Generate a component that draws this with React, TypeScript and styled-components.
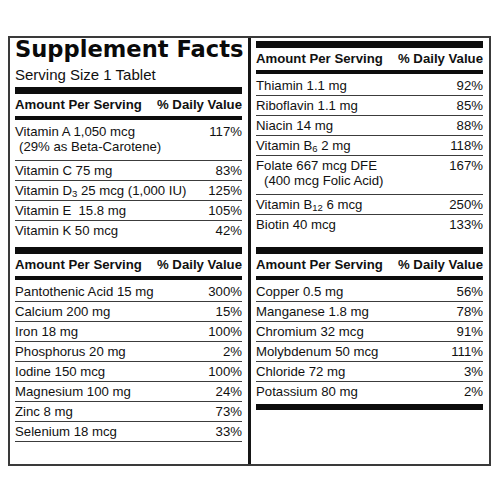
import React from 'react';
import styled, { createGlobalStyle } from 'styled-components';

type Nutrient = {
  name: React.ReactNode;
  dv: string;
  note?: string;
  indent?: number;
};

// subscripts (D3, B6, B12) are used inside the data, so this one is declared first
const Sub = styled.sub`
  font-size: 9.5px;
  line-height: 0;
  vertical-align: -2px;
`;

const topLeft: Nutrient[] = [
  { name: 'Vitamin A 1,050 mcg', note: '(29% as Beta-Carotene)', indent: 4, dv: '117%' },
  { name: 'Vitamin C 75 mg', dv: '83%' },
  { name: <>Vitamin D<Sub>3</Sub> 25 mcg (1,000 IU)</>, dv: '125%' },
  { name: 'Vitamin E  15.8 mg', dv: '105%' },
  { name: 'Vitamin K 50 mcg', dv: '42%' },
];

const bottomLeft: Nutrient[] = [
  { name: 'Pantothenic Acid 15 mg', dv: '300%' },
  { name: 'Calcium 200 mg', dv: '15%' },
  { name: 'Iron 18 mg', dv: '100%' },
  { name: 'Phosphorus 20 mg', dv: '2%' },
  { name: 'Iodine 150 mcg', dv: '100%' },
  { name: 'Magnesium 100 mg', dv: '24%' },
  { name: 'Zinc 8 mg', dv: '73%' },
  { name: 'Selenium 18 mcg', dv: '33%' },
];

const topRight: Nutrient[] = [
  { name: 'Thiamin 1.1 mg', dv: '92%' },
  { name: 'Riboflavin 1.1 mg', dv: '85%' },
  { name: 'Niacin 14 mg', dv: '88%' },
  { name: <>Vitamin B<Sub>6</Sub> 2 mg</>, dv: '118%' },
  { name: 'Folate 667 mcg DFE', note: '(400 mcg Folic Acid)', indent: 8, dv: '167%' },
  { name: <>Vitamin B<Sub>12</Sub> 6 mcg</>, dv: '250%' },
  { name: 'Biotin 40 mcg', dv: '133%' },
];

const bottomRight: Nutrient[] = [
  { name: 'Copper 0.5 mg', dv: '56%' },
  { name: 'Manganese 1.8 mg', dv: '78%' },
  { name: 'Chromium 32 mcg', dv: '91%' },
  { name: 'Molybdenum 50 mcg', dv: '111%' },
  { name: 'Chloride 72 mg', dv: '3%' },
  { name: 'Potassium 80 mg', dv: '2%' },
];

const AmountHeader = () => (
  <SHeading>
    <span>Amount Per Serving</span>
    <span>% Daily Value</span>
  </SHeading>
);

const NutrientList = ({ items, ruleLast }: { items: Nutrient[]; ruleLast?: boolean }) => (
  <SList $ruleLast={ruleLast}>
    {items.map((item, i) => (
      <SRow key={i} $multi={!!item.note}>
        <SName>
          <span>{item.name}</span>
          {item.note && <SNote $indent={item.indent ?? 0}>{item.note}</SNote>}
        </SName>
        <span>{item.dv}</span>
      </SRow>
    ))}
  </SList>
);

export default function App() {
  return (
    <>
      <GlobalStyle />
      <SPanel>
        <SColumn $divider>
          <SUpper>
            <STitle>Supplement Facts</STitle>
            <SServing>Serving Size 1 Tablet</SServing>
            <SBar $h={7} $mt={4} />
            <AmountHeader />
            <SBar $h={4} $mt={1} />
            <NutrientList items={topLeft} />
          </SUpper>
          <SBar $h={7} $mt={0} />
          <AmountHeader />
          <SBar $h={4} $mt={1} />
          <NutrientList items={bottomLeft} ruleLast />
        </SColumn>
        <SColumn>
          <SUpper>
            <SBar $h={7} $mt={3} />
            <AmountHeader />
            <SBar $h={4} $mt={1} />
            <NutrientList items={topRight} />
          </SUpper>
          <SBar $h={7} $mt={0} />
          <AmountHeader />
          <SBar $h={4} $mt={1} />
          <NutrientList items={bottomRight} />
          <SBar $h={6} $mt={3} />
        </SColumn>
      </SPanel>
    </>
  );
}

const GlobalStyle = createGlobalStyle`
  body {
    margin: 0;
    background: #fff;
    color: #111;
    font-family: 'Liberation Sans', Arial, sans-serif;
  }
`;

const SPanel = styled.div`
  box-sizing: border-box;
  margin: 36px 0 0 8px;
  width: 483px;
  height: 430px;
  border: 2px solid #3a3a3a;
  display: grid;
  grid-template-columns: 241px 238px;
`;

const SColumn = styled.div<{ $divider?: boolean }>`
  box-sizing: border-box;
  display: flex;
  flex-direction: column;
  padding: 0 6px 0 5px;
  border-right: ${({ $divider }) => ($divider ? '3px solid #161616' : 'none')};
`;

const SUpper = styled.div`
  height: 209px;
  display: flex;
  flex-direction: column;
`;

const STitle = styled.div`
  font-family: 'DejaVu Sans', 'Liberation Sans', sans-serif;
  font-weight: 700;
  font-size: 22.6px;
  line-height: 22px;
  white-space: nowrap;
  color: #0a0a0a;
`;

const SServing = styled.div`
  margin-top: 6px;
  font-size: 15px;
  line-height: 17px;
`;

const SBar = styled.div<{ $h: number; $mt: number }>`
  flex: none;
  height: ${({ $h }) => $h}px;
  margin-top: ${({ $mt }) => $mt}px;
  background: #0d0d0d;
`;

const SHeading = styled.div`
  display: flex;
  justify-content: space-between;
  padding: 3px 0 2px;
  font-weight: 700;
  font-size: 13.2px;
  line-height: 16px;
`;

const SList = styled.div<{ $ruleLast?: boolean }>`
  display: flex;
  flex-direction: column;

  & > div:first-child {
    padding-top: 4px;
  }

  & > div:last-child {
    border-bottom: ${({ $ruleLast }) => ($ruleLast ? '1px solid #3c3c3c' : 'none')};
  }
`;

const SRow = styled.div<{ $multi: boolean }>`
  display: flex;
  justify-content: space-between;
  align-items: flex-start;
  padding: 2px 0 ${({ $multi }) => ($multi ? 6 : 2)}px;
  font-size: 13.2px;
  line-height: 15px;
  border-bottom: 1px solid #3c3c3c;
`;

const SName = styled.div`
  display: flex;
  flex-direction: column;
  white-space: pre;
`;

const SNote = styled.span<{ $indent: number }>`
  padding-left: ${({ $indent }) => $indent}px;
`;
